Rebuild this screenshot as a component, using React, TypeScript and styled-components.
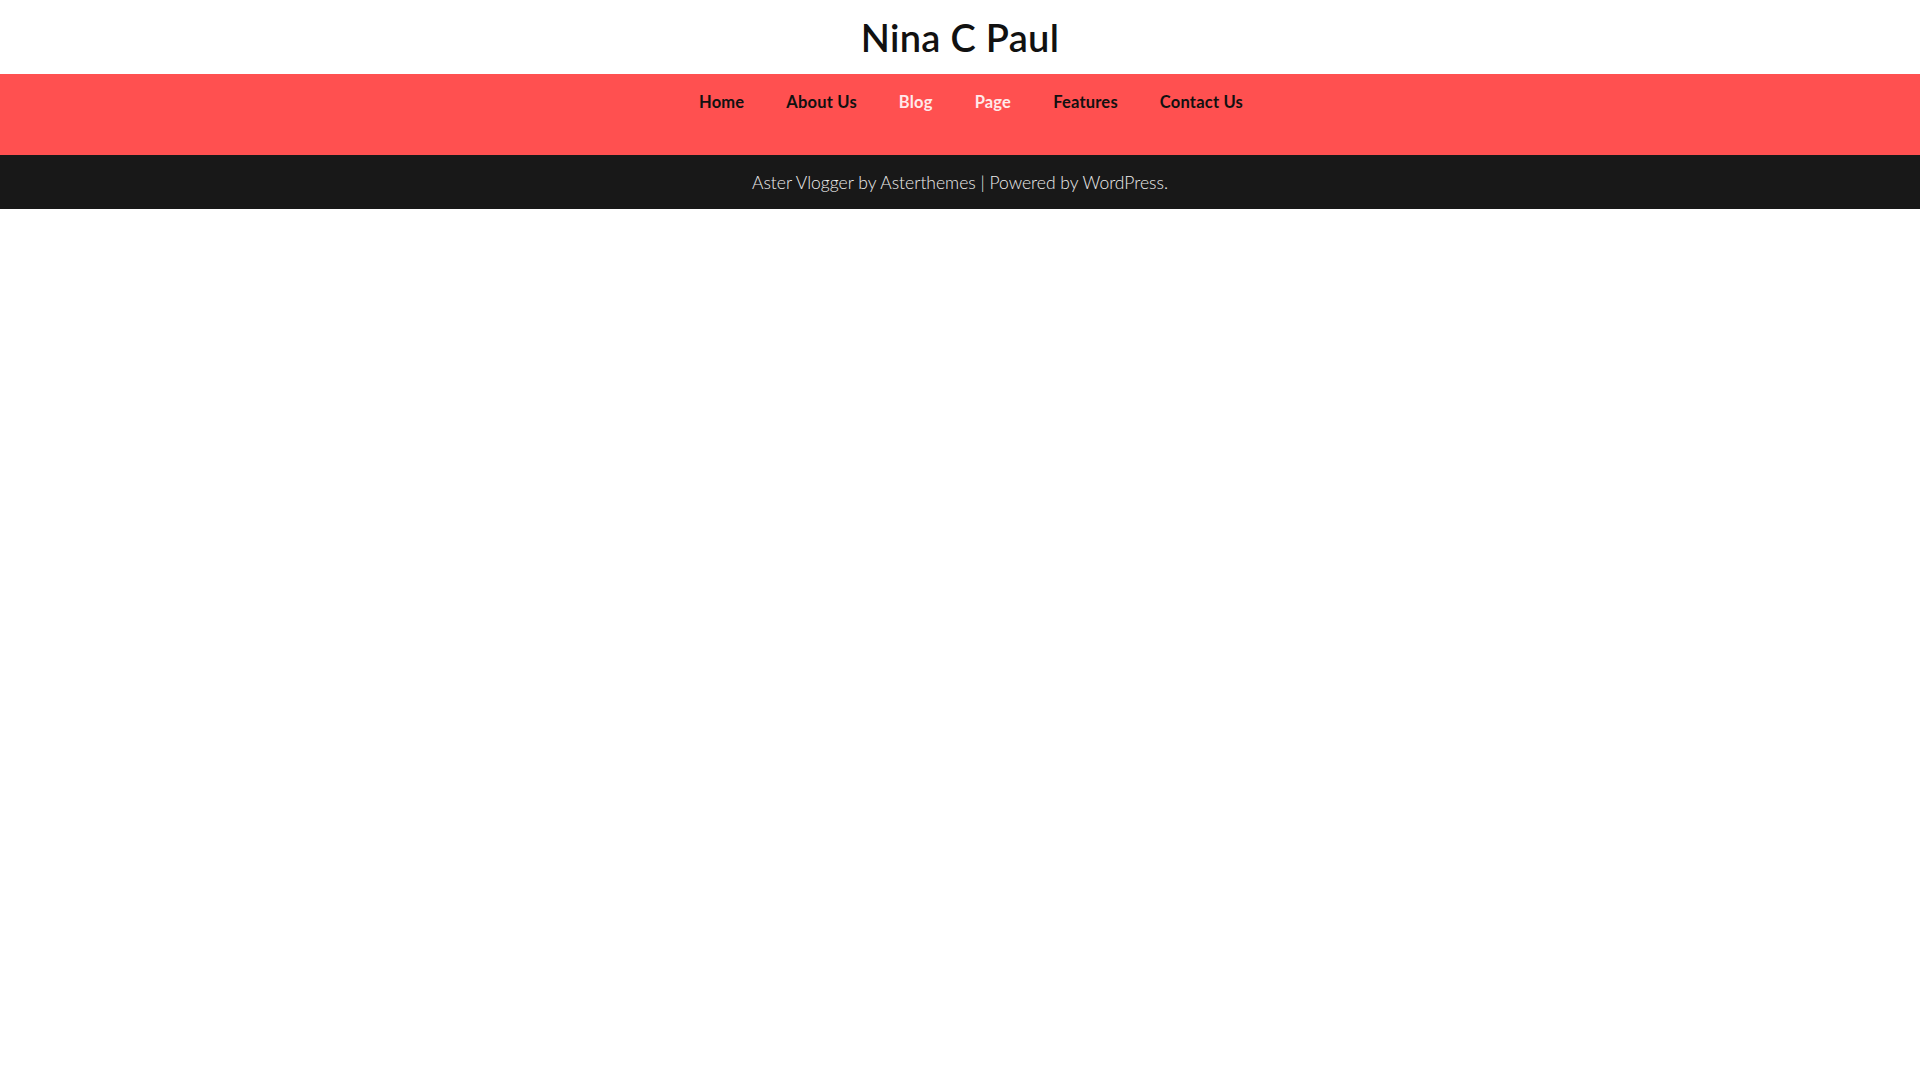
import React from "react";
import styled, { createGlobalStyle } from "styled-components";

const Global = createGlobalStyle`
  html, body { margin: 0; padding: 0; background: #ffffff; }
  body { font-family: "Lato", "Open Sans", sans-serif; }
`;

const Header = styled.header`
  height: 74px;
  display: flex;
  align-items: center;
  justify-content: center;
`;

const Title = styled.h1`
  margin: 0;
  font-family: "Lato", sans-serif;
  font-size: 38px;
  font-weight: 600;
  color: #111;
  letter-spacing: 0.3px;
  line-height: 1;
`;

const NavBar = styled.nav`
  background: #ff5050;
  height: 81px;
  display: flex;
  justify-content: center;
  align-items: flex-start;
`;

const NavList = styled.ul`
  list-style: none;
  margin: 0;
  padding: 17px 0 0 22px;
  display: flex;
`;

const NavItem = styled.li<{ $light?: boolean }>`
  padding: 0 21px;
  font-family: "Lato", sans-serif;
  font-size: 16.5px;
  font-weight: 700;
  letter-spacing: 0.2px;
  line-height: 22px;
  color: ${(p) => (p.$light ? "#ffeaea" : "#111")};
`;

const Footer = styled.footer`
  background: #181818;
  height: 54px;
  display: flex;
  align-items: center;
  justify-content: center;
`;

const FooterText = styled.p`
  margin: 0;
  font-family: "Lato", sans-serif;
  font-size: 17.5px;
  font-weight: 300;
  color: #ececec;
`;

const items: { label: string; light?: boolean }[] = [
  { label: "Home" },
  { label: "About Us" },
  { label: "Blog", light: true },
  { label: "Page", light: true },
  { label: "Features" },
  { label: "Contact Us" },
];

export default function App() {
  return (
    <>
      <Global />
      <Header>
        <Title>Nina C Paul</Title>
      </Header>
      <NavBar>
        <NavList>
          {items.map((it) => (
            <NavItem key={it.label} $light={it.light}>
              {it.label}
            </NavItem>
          ))}
        </NavList>
      </NavBar>
      <Footer>
        <FooterText>Aster Vlogger by Asterthemes | Powered by WordPress.</FooterText>
      </Footer>
    </>
  );
}
